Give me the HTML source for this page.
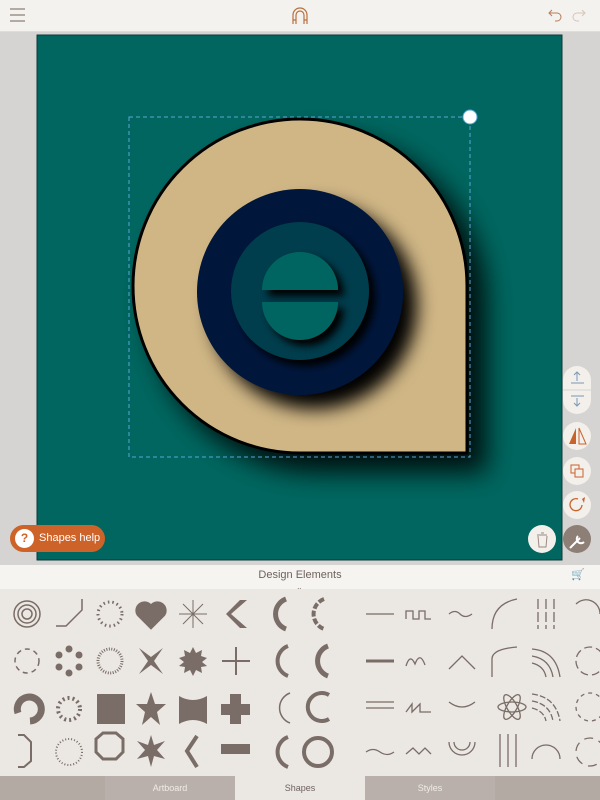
<!DOCTYPE html>
<html><head><meta charset="utf-8"><style>
*{margin:0;padding:0;box-sizing:border-box}
body{width:600px;height:800px;overflow:hidden;background:#d5d4d2;font-family:"Liberation Sans",sans-serif;position:relative}
.top{position:absolute;left:0;top:0;width:600px;height:32px;background:#f4f2ee;border-bottom:1px solid #ddd}
.hdr{position:absolute;left:0;top:565px;width:600px;height:24px;background:#f6f4f1;text-align:center;font-size:11px;color:#6e625d;line-height:20px}
.grid{position:absolute;left:0;top:589px;width:600px;height:187px;background:#ebe7e3}
.tabs{position:absolute;left:0;top:776px;width:600px;height:24px;background:#b9b0ab;font-size:9px;color:#f0ebe8;line-height:24px}
.tabs div{position:absolute;top:0;height:24px;text-align:center}
.btn{position:absolute;width:28px;height:28px;border-radius:50%;background:#f3efea}
</style></head><body>
<div class="top">
<svg width="600" height="32" style="position:absolute;left:0;top:0">
<g stroke="#8a7a72" stroke-width="1.2"><line x1="10" y1="9" x2="25" y2="9"/><line x1="10" y1="15" x2="25" y2="15"/><line x1="10" y1="21" x2="25" y2="21"/></g>
<path d="M293 24 V15 A7 7 0 0 1 307 15 V24 M296 24 V15 A4 4 0 0 1 304 15 V24 M293 20 H296 M304 20 H307" stroke="#b8703f" stroke-width="1.2" fill="none"/>
<path d="M552 10 L549 13 L552 16 M549 13 H557 A4 4 0 0 1 557 21 H555" stroke="#b87c5a" stroke-width="1" fill="none"/>
<path d="M582 10 L585 13 L582 16 M585 13 H577 A4 4 0 0 0 577 21 H579" stroke="#d8c4b8" stroke-width="1" fill="none"/>
</svg></div>
<svg width="600" height="565" style="position:absolute;left:0;top:0">
<defs>
<filter id="sh" x="-30%" y="-30%" width="170%" height="170%"><feGaussianBlur in="SourceAlpha" stdDeviation="13"/><feOffset dx="18" dy="18"/><feComponentTransfer><feFuncA type="linear" slope="0.85"/></feComponentTransfer><feMerge><feMergeNode/><feMergeNode in="SourceGraphic"/></feMerge></filter>
<filter id="sh1" x="-30%" y="-30%" width="170%" height="170%"><feGaussianBlur in="SourceAlpha" stdDeviation="9"/><feOffset dx="14" dy="14"/><feMerge><feMergeNode/><feMergeNode in="SourceGraphic"/></feMerge></filter>
<filter id="sh2" x="-30%" y="-30%" width="160%" height="160%"><feGaussianBlur in="SourceAlpha" stdDeviation="4"/><feOffset dx="6" dy="6"/><feMerge><feMergeNode/><feMergeNode in="SourceGraphic"/></feMerge></filter>
</defs>
<rect x="37" y="35" width="525" height="525" fill="#00665f" stroke="#0a3a38"/>
<path d="M467 453 L300 453 A167 167 0 1 1 467 287 Z" fill="#d0b685" stroke="#000" stroke-width="3" filter="url(#sh)"/>
<circle cx="300" cy="292" r="103" fill="#01193b" filter="url(#sh1)"/>
<circle cx="300" cy="291" r="69" fill="#003e4e" filter="url(#sh2)"/>
<g filter="url(#sh2)" fill="#016560">
<path d="M262 290 A38 38 0 0 1 338 290 Z"/>
<path d="M262 302 A38 38 0 0 0 338 302 Z"/>
</g>
<rect x="129" y="117" width="341" height="340" fill="none" stroke="#5aa6d6" stroke-width="1" stroke-dasharray="4,3"/>
<circle cx="470" cy="117" r="7" fill="#fff" stroke="#5aa6d6"/>
</svg>
<div style="position:absolute;left:10px;top:525px;width:95px;height:27px;border-radius:14px;background:#cd6328;color:#fff;font-size:11px;line-height:27px;padding-left:29px">Shapes help
<div style="position:absolute;left:5px;top:4px;width:19px;height:19px;border-radius:50%;background:#fff;color:#cd6328;font-weight:bold;text-align:center;line-height:19px;font-size:12px">?</div></div>
<div class="btn" style="left:563px;top:366px;height:48px;border-radius:14px"></div>
<svg width="600" height="565" style="position:absolute;left:0;top:0">
<g stroke="#7a98b8" stroke-width="1" fill="none"><path d="M571 383 H584 M577 381 V372 M574 375 L577 372 L580 375 M571 396 H584 M577 398 V406 M574 403 L577 406 L580 403"/></g>
<line x1="563" y1="390" x2="591" y2="390" stroke="#d5d4d2"/>
</svg>
<div class="btn" style="left:563px;top:422px"></div>
<div class="btn" style="left:563px;top:457px"></div>
<div class="btn" style="left:563px;top:491px"></div>
<div class="btn" style="left:563px;top:525px;background:#8d7e76"></div>
<div class="btn" style="left:528px;top:525px"></div>
<svg width="600" height="565" style="position:absolute;left:0;top:0">
<path d="M576 428 L576 444 L569 444 Z" fill="#c9632c"/><path d="M579 428 L586 444 L579 444 Z" fill="none" stroke="#c9632c"/>
<rect x="571" y="465" width="8" height="8" fill="none" stroke="#c9632c"/><rect x="575" y="469" width="8" height="8" fill="#f3efea" stroke="#c9632c"/>
<path d="M582 505 A6 6 0 1 1 578 499" fill="none" stroke="#c9632c" stroke-width="1.3"/><path d="M582 499 L585 497 L584 503 Z" fill="#c9632c"/>
<path d="M570 548 L580 538 M578 536 A4 4 0 1 0 584 542" stroke="#fff" stroke-width="2" fill="none"/>
<path d="M537 535 H547 M541 533 H544 M538 536 L539 547 H546 L547 536" stroke="#998a83" fill="none"/>
</svg>
<div class="hdr">Design Elements<span style="position:absolute;left:296px;top:13px;font-size:8px">⌄</span>
<span style="position:absolute;left:571px;top:0;color:#b8501e">🛒</span></div>
<div class="grid">
<svg width="600" height="187">
<g fill="#7a6c66" stroke="#7a6c66" stroke-width="2.5">
<g fill="none" stroke-width="1.5">
<circle cx="27" cy="25" r="13"/><circle cx="27" cy="25" r="9"/><circle cx="27" cy="25" r="5"/>
<path d="M56 37 H66 L82 21 V10"/>
<circle cx="110" cy="25" r="12" stroke-dasharray="1.5,3" stroke-width="3"/>
<path d="M286 10 A16 16 0 0 0 286 40" stroke-width="5"/>
<path d="M324 10 A16 16 0 0 0 324 40" stroke-width="4" stroke-dasharray="6,2"/>
<circle cx="27" cy="72" r="12" stroke-dasharray="5,4"/>
<circle cx="110" cy="72" r="12" stroke-dasharray="1,1.5" stroke-width="3"/>
<path d="M288 57 A16 16 0 0 0 288 87" stroke-width="4"/>
<path d="M328 57 A16 16 0 0 0 328 87" stroke-width="5"/>
<path d="M290 104 A16 16 0 0 0 290 134" stroke-width="1.5"/>
<path d="M329 106 A14 14 0 1 0 329 130" stroke-width="4"/>
<circle cx="69" cy="163" r="13" stroke-dasharray="1,2" stroke-width="2"/>
<path d="M96 150 L103 144 H116 L123 150 V163 L116 170 H103 L96 163 Z" stroke-width="3"/>
<path d="M288 148 A16 16 0 0 0 288 178" stroke-width="4"/>
<circle cx="318" cy="163" r="14" stroke-width="4"/>
<path d="M18 146 H24 L31 153 V172 L24 178 H18" stroke-width="2"/>
<path d="M18 124 A12 12 0 1 1 30 132" stroke-width="7"/>
<path d="M197 147 L187 162 L197 178" stroke-width="4"/>
<g stroke-width="1"><line x1="179" y1="25" x2="207" y2="25"/><line x1="193" y1="11" x2="193" y2="39"/><line x1="183" y1="15" x2="203" y2="35"/><line x1="203" y1="15" x2="183" y2="35"/></g>
<path d="M222 72 H250 M236 58 V86" stroke-width="2"/>
</g>
<path d="M151 39 L138 26 A7 7 0 0 1 151 17 A7 7 0 0 1 164 26 Z"/>
<path d="M247 11 L231 25 L247 39 H240 L226 25 L240 11 Z" stroke="none"/>
<g stroke="none"><circle cx="69" cy="60" r="3.5"/><circle cx="59" cy="66" r="3.5"/><circle cx="79" cy="66" r="3.5"/><circle cx="59" cy="78" r="3.5"/><circle cx="79" cy="78" r="3.5"/><circle cx="69" cy="84" r="3.5"/></g>
<path d="M139 59 L151 68 L163 59 L154 72 L163 85 L151 76 L139 85 L148 72 Z" stroke="none"/>
<path d="M193 58 L196 64 L202 61 L201 67 L207 69 L202 73 L207 77 L201 78 L202 84 L196 81 L193 87 L190 81 L184 84 L185 78 L179 77 L184 73 L179 69 L185 67 L184 61 L190 64 Z" stroke="none"/>
<circle cx="69" cy="120" r="11" fill="none" stroke-dasharray="2,3" stroke-width="4"/>
<rect x="97" y="105" width="28" height="30" stroke="none"/>
<path d="M151 103 L155 115 L166 115 L157 123 L160 136 L151 128 L142 136 L145 123 L136 115 L147 115 Z" stroke="none"/>
<path d="M179 107 Q193 115 207 107 V135 Q193 127 179 135 Z" stroke="none"/>
<path d="M230 105 H241 V115 H250 V126 H241 V135 H230 V126 H221 V115 H230 Z" stroke="none"/>
<path d="M151 146 L154 156 L165 152 L157 161 L165 170 L154 167 L151 178 L148 167 L137 170 L145 161 L137 152 L148 156 Z" stroke="none"/>
<rect x="221" y="155" width="29" height="10" stroke="none"/>
<g fill="none" stroke-width="1.3">
<line x1="366" y1="25" x2="394" y2="25"/><path d="M406 30 V22 H413 V30 H419 V22 H425 V30 H431"/><path d="M449 25 Q455 20 460 25 T472 25"/>
<path d="M492 40 Q492 15 517 10"/><path d="M538 10 V40 M546 10 V40 M554 10 V40" stroke-dasharray="10,3"/><path d="M576 15 A14 14 0 0 1 600 25"/>
<line x1="366" y1="72" x2="394" y2="72" stroke-width="3"/><path d="M406 77 Q410 64 415 75 Q420 62 425 76"/><path d="M449 80 L462 67 L475 80"/>
<path d="M492 88 V70 Q492 60 517 58"/><path d="M532 60 Q556 62 560 88 M532 67 Q550 70 553 88 M532 74 Q544 77 546 88"/><circle cx="590" cy="72" r="14" stroke-dasharray="8,4"/>
<path d="M366 113 H394 M366 119 H394"/><path d="M406 123 L412 115 V123 L420 115 V123 H431"/><path d="M449 113 Q462 123 475 113"/>
<ellipse cx="512" cy="118" rx="14" ry="5"/><ellipse cx="512" cy="118" rx="14" ry="5" transform="rotate(60 512 118)"/><ellipse cx="512" cy="118" rx="14" ry="5" transform="rotate(-60 512 118)"/>
<path d="M532 105 Q556 108 560 132 M532 112 Q550 115 553 132 M532 119 Q544 122 546 132" stroke-dasharray="6,2"/><circle cx="590" cy="118" r="14" stroke-dasharray="4,4"/>
<path d="M366 163 Q373 158 380 163 T394 163"/><path d="M406 165 L413 159 L419 165 L425 159 L431 165"/><path d="M449 153 A13 13 0 0 0 475 153 M454 153 A8 8 0 0 0 470 153"/>
<path d="M500 145 V178 M508 145 V178 M516 145 V178"/><path d="M532 170 A14 14 0 0 1 560 170"/><circle cx="590" cy="163" r="14" stroke-dasharray="9,6"/>
</g>
</g></svg></div>
<div class="tabs"><div style="left:0;width:105px;background:#b3aaa4"></div>
<div style="left:105px;width:130px">Artboard</div>
<div style="left:235px;width:130px;background:#ebe7e3;color:#6e625d">Shapes</div>
<div style="left:365px;width:130px">Styles</div>
<div style="left:495px;width:105px;background:#b3aaa4"></div></div>
</body></html>
